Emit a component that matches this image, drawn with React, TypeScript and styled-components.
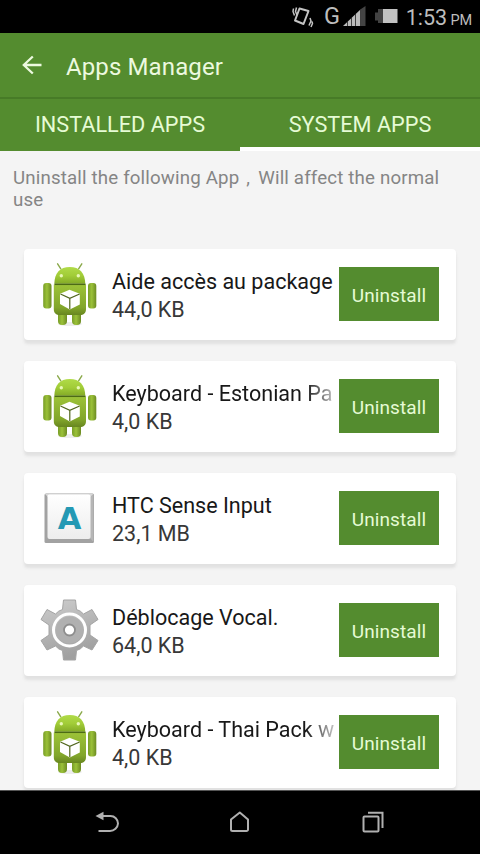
import React from "react";
import styled, { createGlobalStyle } from "styled-components";

const GlobalStyle = createGlobalStyle`
  * { box-sizing: border-box; }
  html, body { margin: 0; padding: 0; overflow: hidden; }
  body { font-family: Roboto, "Liberation Sans", sans-serif; }
`;

const green = "#548c2f";

const Screen = styled.div`
  width: 480px;
  height: 854px;
  display: flex;
  flex-direction: column;
  background: #f4f4f4;
  overflow: hidden;
`;

const StatusBar = styled.div`
  height: 33px;
  flex: none;
  background: #000;
  color: #bdbdbd;
  display: flex;
  justify-content: flex-end;
  padding-right: 8px;
`;

const StatusIcons = styled.svg`
  width: 113px;
  height: 33px;
  flex: none;
`;

const Clock = styled.div`
  width: 72px;
  display: flex;
  align-items: baseline;
  justify-content: flex-end;
  font-size: 21.5px;
  line-height: 35px;
  letter-spacing: -0.1px;
  white-space: nowrap;
`;

const Meridiem = styled.span`
  font-size: 14.5px;
  margin-left: 3.5px;
`;

const AppBar = styled.header`
  height: 66px;
  flex: none;
  display: flex;
  align-items: center;
  background: ${green};
  border-bottom: 2px solid #477b27;
  padding-left: 20px;
`;

const BackIcon = styled.svg`
  width: 24px;
  height: 24px;
`;

const Title = styled.h1`
  margin: 3px 0 0 22px;
  color: #ecf9df;
  font-size: 24px;
  font-weight: 400;
  line-height: 32px;
  letter-spacing: 0.12px;
`;

const Tabs = styled.nav`
  height: 52px;
  flex: none;
  display: grid;
  grid-template-columns: 1fr 1fr;
  background: ${green};
`;

const Tab = styled.div<{ $active?: boolean }>`
  color: #e6fbd5;
  font-size: 21.7px;
  line-height: 52px;
  text-align: center;
  height: 52px;
  border-bottom: ${(p) => (p.$active ? "4px solid #fff" : "0")};
`;

const Notice = styled.p`
  margin: 0;
  flex: none;
  height: 98px;
  padding: 16px 20px 0 13px;
  color: #858585;
  font-size: 18.7px;
  line-height: 22px;
  letter-spacing: 0.16px;
`;

const Comma = styled.span`
  padding: 0 8px 0 7px;
`;

const List = styled.main`
  flex: 1;
  min-height: 0;
  overflow: hidden;
  padding: 0 24px;
  display: flex;
  flex-direction: column;
  gap: 21px;
`;

const Card = styled.article`
  height: 91px;
  flex: none;
  display: flex;
  background: #fff;
  border-radius: 4px;
  box-shadow: 0 4px 3px #e1e1e1, 0 0 2px #eeeeee;
`;

const IconBox = styled.svg`
  width: 88px;
  height: 91px;
  flex: none;
`;

const Details = styled.div`
  width: 222px;
  flex: none;
  padding-top: 18px;
`;

const AppName = styled.div<{ $fade?: boolean }>`
  height: 28px;
  line-height: 29px;
  font-size: 21.55px;
  color: #181818;
  white-space: nowrap;
  overflow: hidden;
  mask-image: ${(p) =>
    p.$fade ? "linear-gradient(to right, #000 194px, transparent 232px)" : "none"};
`;

const AppSize = styled.div`
  height: 29px;
  line-height: 29px;
  font-size: 21.5px;
  color: #383838;
`;

const UninstallButton = styled.button`
  width: 100px;
  height: 54px;
  margin: 18px 0 0 5px;
  padding: 2px 0 0;
  border: 0;
  background: ${green};
  color: #e6fbd5;
  font-family: inherit;
  font-size: 19px;
  letter-spacing: 0.1px;
`;

const NavBar = styled.footer`
  height: 64px;
  flex: none;
  display: flex;
  padding-left: 40px;
  background: #000;
  border-top: 1px solid #555;
`;

const NavIcon = styled.svg`
  width: 133px;
  height: 63px;
  fill: none;
  stroke: #b0b0b0;
  stroke-width: 2;
`;

const AndroidIcon = () => (
  <IconBox viewBox="0 0 88 91">
    <defs>
      <linearGradient id="head" x1="0" y1="0" x2="0" y2="1">
        <stop offset="0" stopColor="#b0db48" />
        <stop offset="0.5" stopColor="#a2cd38" />
        <stop offset="1" stopColor="#83aa26" />
      </linearGradient>
      <linearGradient id="body" x1="0" y1="0" x2="0" y2="1">
        <stop offset="0" stopColor="#9dc338" />
        <stop offset="0.75" stopColor="#82a62b" />
        <stop offset="1" stopColor="#688620" />
      </linearGradient>
      <linearGradient id="limb" x1="0" y1="0" x2="1" y2="0">
        <stop offset="0" stopColor="#789d27" />
        <stop offset="0.45" stopColor="#9bc139" />
        <stop offset="1" stopColor="#6c8b22" />
      </linearGradient>
    </defs>
    <ellipse cx="46" cy="75" rx="12" ry="2" fill="#eeeeee" />
    <g stroke="#8aa94a" strokeWidth="1.4" strokeLinecap="round">
      <path d="M33.600 14.800l3.200 5M57.800 14.800l-3.200 5" />
    </g>
    <g fill="url(#limb)">
      <rect x="34" y="61" width="9" height="15" rx="4" />
      <rect x="48" y="61" width="9" height="15" rx="4" />
      <rect x="19.200" y="34" width="8.300" height="25.500" rx="3" />
      <rect x="64" y="34" width="8.300" height="25.500" rx="3" />
    </g>
    <path d="M30.300 34.800C30.500 24 36 18 45.800 18s15.200 6 15.500 16.800z" fill="url(#head)" />
    <path d="M29.800 35.500h32.200v24.500c0 4-2.500 6-6 6H36c-4 0-6.200-2-6.200-6z" fill="url(#body)" />
    <path d="M30.500 35.300h31" stroke="#4c6b14" strokeWidth="1.500" />
    <circle cx="37.300" cy="26.800" r="1.700" fill="#e8f8b6" />
    <circle cx="54.300" cy="26.800" r="1.700" fill="#e8f8b6" />
    <path d="M36 44.800l9.500-4 10.300 4V55.500l-10 5L36 55z" fill="#fff" />
    <path d="M36.500 45l9.300 4.300 9.800-4.300M45.800 49.300V60" fill="none" stroke="#50651d" strokeWidth="1.200" />
  </IconBox>
);

const KeyText = styled.text`
  font-family: "DejaVu Sans", sans-serif;
  font-size: 30.5px;
  font-weight: 700;
  fill: #2499b4;
`;

const KeyIcon = () => (
  <IconBox viewBox="0 0 88 91">
    <defs>
      <linearGradient id="keyface" x1="0" y1="0" x2="0" y2="1">
        <stop offset="0" stopColor="#fff" />
        <stop offset="1" stopColor="#ededed" />
      </linearGradient>
    </defs>
    <rect x="20.500" y="20.500" width="49.500" height="49.500" rx="1.500" fill="#a2a2a2" />
    <path d="M21 21h48.500l-3 3V65H24V24z" fill="#d9d9d9" />
    <path d="M69.500 21v48l-3.500-4V24z" fill="#b6b6b6" />
    <rect x="23.500" y="21.500" width="43" height="44.500" rx="2" fill="url(#keyface)" />
    <KeyText x="45.500" y="56" textAnchor="middle">A</KeyText>
  </IconBox>
);

const GearIcon = () => (
  <IconBox viewBox="0 0 88 91">
    <defs>
      <linearGradient id="gear" x1="0" y1="0" x2="0.3" y2="1">
        <stop offset="0" stopColor="#cdcdcd" />
        <stop offset="1" stopColor="#a0a0a0" />
      </linearGradient>
    </defs>
    <path
      transform="translate(45.5 45)"
      d="M-6-30H6L7-20.500Q11-19.500 14-16L22.500-20.500 28.500-10.500 20.500-5V5L28.500 10.500 22.500 20 14 16Q11 19.500 7 20.500L6 30H-6L-7 20.500Q-11 19.500-14 16L-22.500 20-28.500 10.500-20.500 5V-5L-28.500-10.500-22.500-20.500-14-16Q-11-19.500-7-20.500Z"
      fill="url(#gear)"
      stroke="#a4a4a4"
      strokeWidth="1"
      strokeLinejoin="round"
    />
    <circle cx="45.500" cy="45" r="16" fill="none" stroke="#fff" strokeWidth="3" />
    <circle cx="45.500" cy="45" r="13.500" fill="#b0b0b0" />
    <circle cx="45.500" cy="45" r="5.500" fill="#fff" stroke="#8d8d8d" strokeWidth="1.800" />
  </IconBox>
);

type Kind = "android" | "key" | "gear";
const icons: Record<Kind, React.FC> = { android: AndroidIcon, key: KeyIcon, gear: GearIcon };

const apps: { name: string; size: string; kind: Kind; fade?: boolean }[] = [
  { name: "Aide accès au package", size: "44,0 KB", kind: "android" },
  { name: "Keyboard - Estonian Pa", size: "4,0 KB", kind: "android", fade: true },
  { name: "HTC Sense Input", size: "23,1 MB", kind: "key" },
  { name: "Déblocage Vocal.", size: "64,0 KB", kind: "gear" },
  { name: "Keyboard - Thai Pack w", size: "4,0 KB", kind: "android", fade: true },
];

export default function App() {
  return (
    <Screen>
      <GlobalStyle />
      <StatusBar>
        <StatusIcons viewBox="287 0 113 33">
          <g fill="none" stroke="#c4c4c4" strokeWidth="2">
            <path d="M299.500 8.500l9 2.500-5 13-8.500-3.500z" strokeLinejoin="round" />
            <path d="M296.500 7.500l-1 4 1.500 3.500M293.500 8.500l-.5 3 1.500 4M310 18l1 3-2 4.500M312 21.500l.5 2-1.500 3.500" strokeWidth="1.500" />
          </g>
          <text x="324" y="24" fontSize="23.500" fill="#bdbdbd">G</text>
          <path d="M343 26L361 9v17z" fill="#bcbcbc" />
          <path d="M361 9l4.500-3v20H361z" fill="#444" />
          <path d="M347.500 21v5M351.500 18v8M355.500 14v12M360.500 9v17" stroke="#222" strokeWidth="0.800" />
          <path d="M375 12.500h3V9h5v14h-5v-2.500h-3z" fill="#424242" />
          <rect x="383" y="9" width="14.500" height="14" fill="#c2c2c2" />
        </StatusIcons>
        <Clock>
          1:53<Meridiem>PM</Meridiem>
        </Clock>
      </StatusBar>
      <AppBar>
        <BackIcon viewBox="0 0 24 24" fill="none" stroke="#ecf9df" strokeWidth="2.300">
          <path d="M21.500 12H4M12.800 3.500L3.800 12l9 8.500" />
        </BackIcon>
        <Title>Apps Manager</Title>
      </AppBar>
      <Tabs>
        <Tab>INSTALLED APPS</Tab>
        <Tab $active>SYSTEM APPS</Tab>
      </Tabs>
      <Notice>
        Uninstall the following App<Comma>,</Comma>Will affect the normal use
      </Notice>
      <List>
        {apps.map((app) => {
          const Icon = icons[app.kind];
          return (
            <Card key={app.name}>
              <Icon />
              <Details>
                <AppName $fade={app.fade}>{app.name}</AppName>
                <AppSize>{app.size}</AppSize>
              </Details>
              <UninstallButton>Uninstall</UninstallButton>
            </Card>
          );
        })}
      </List>
      <NavBar>
        <NavIcon viewBox="39.5 791 133 63">
          <path d="M98 831h11.500a8 8 0 0 0 8-7.500 7.500 7.500 0 0 0-7.500-7.500h-9" />
          <path d="M95 816l8-4.200v8.400z" fill="#b0b0b0" stroke="none" />
        </NavIcon>
        <NavIcon viewBox="173 791 133 63">
          <path d="M231 829.500v-10l8.800-7 8.200 7v10a1.500 1.500 0 0 1-1.500 1.500h-14a1.500 1.500 0 0 1-1.500-1.500z" strokeLinejoin="round" />
        </NavIcon>
        <NavIcon viewBox="306 791 133 63">
          <rect x="363.500" y="816.500" width="15" height="15" rx="1" />
          <path d="M368 812.800h14.500V828" />
        </NavIcon>
      </NavBar>
    </Screen>
  );
}
